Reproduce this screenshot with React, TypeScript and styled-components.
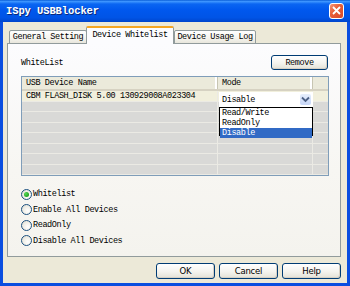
import * as React from "react"
import styled, { createGlobalStyle } from "styled-components"

const mono = `"Liberation Mono", "DejaVu Sans Mono", monospace`

const GlobalStyle = createGlobalStyle`
  html, body {
    margin: 0;
    padding: 0;
    background: #ffffff;
  }
  * {
    box-sizing: border-box;
  }
`

const rows = [
  { name: "CBM FLASH_DISK 5.00 130929008A023304", mode: "Disable" },
  null,
  null,
  null,
  null,
  null,
  null,
  null
]

const modes = ["Read/Write", "ReadOnly", "Disable"]

const options = [
  { label: "Whitelist", checked: true },
  { label: "Enable All Devices", checked: false },
  { label: "ReadOnly", checked: false },
  { label: "Disable All Devices", checked: false }
]

export default () => (
  <>
    <GlobalStyle />
    <Window>
      <TitleBar>
        <Title>ISpy USBBlocker</Title>
        <CloseButton>
          <svg width="9" height="9" viewBox="0 0 9 9">
            <path d="M1 1 L8 8 M8 1 L1 8" stroke="#fff" strokeWidth="1.8" />
          </svg>
        </CloseButton>
      </TitleBar>
      <Body>
        <TabStrip>
          <Tab width={78}>General Setting</Tab>
          <Tab width={88} active>
            Device Whitelist
          </Tab>
          <Tab width={82}>Device Usage Log</Tab>
        </TabStrip>
        <Panel>
          <TopRow>
            <Label>WhiteList</Label>
            <Button width={57}>Remove</Button>
          </TopRow>
          <List>
            <HeaderRow>
              <HeaderCell>USB Device Name</HeaderCell>
              <HeaderCell>Mode</HeaderCell>
              <HeaderCell />
            </HeaderRow>
            <RowArea>
              {rows.map((r, i) => (
                <Row key={i} filled={!!r}>
                  <Cell>{r ? r.name : ""}</Cell>
                  <Cell />
                  <Cell />
                </Row>
              ))}
            </RowArea>
            <Combo>
              <ComboText>Disable</ComboText>
              <ComboArrow>
                <svg width="9" height="7" viewBox="0 0 9 7">
                  <path
                    d="M1 1.5 L4.5 5 L8 1.5"
                    stroke="#4d6185"
                    strokeWidth="1.8"
                    fill="none"
                  />
                </svg>
              </ComboArrow>
            </Combo>
            <DropList>
              {modes.map(m => (
                <DropItem key={m} selected={m === "Disable"}>
                  {m}
                </DropItem>
              ))}
            </DropList>
          </List>
          <RadioGroup>
            {options.map(o => (
              <RadioRow key={o.label}>
                <RadioCircle>{o.checked && <RadioDot />}</RadioCircle>
                <RadioLabel>{o.label}</RadioLabel>
              </RadioRow>
            ))}
          </RadioGroup>
        </Panel>
        <ButtonRow>
          <Button width={59} sans>
            OK
          </Button>
          <Button width={59} sans>
            Cancel
          </Button>
          <Button width={59} sans>
            Help
          </Button>
        </ButtonRow>
      </Body>
    </Window>
  </>
)

const Window = styled.div`
  width: 350px;
  height: 286px;
  display: flex;
  flex-direction: column;
  background: #0a4ee0;
  overflow: hidden;
`

const TitleBar = styled.div`
  height: 22px;
  display: flex;
  align-items: center;
  padding: 0 6px 1px 6px;
  background: linear-gradient(
    to bottom,
    #0a5fd8 0%,
    #3d95ff 7%,
    #0a66f2 18%,
    #0058ee 45%,
    #0054e6 80%,
    #0045cc 100%
  );
`

const Title = styled.span`
  font-family: ${mono};
  font-weight: bold;
  font-size: 10.5px;
  letter-spacing: -0.1px;
  color: #ffffff;
  text-shadow: 1px 1px 0 #0a2a7a;
`

const CloseButton = styled.div`
  margin-left: auto;
  width: 15px;
  height: 16px;
  border: 1px solid #ffffff;
  border-radius: 3px;
  background: linear-gradient(135deg, #f4967a 0%, #e8603a 40%, #d8482a 100%);
  display: flex;
  align-items: center;
  justify-content: center;
`

const Body = styled.div`
  flex: 1;
  margin: 0 3px 3px 3px;
  background: #ece9d8;
  display: flex;
  flex-direction: column;
  padding: 5px 6px 4px 4px;
`

const TabStrip = styled.div`
  height: 17px;
  display: flex;
  align-items: flex-end;
  padding-left: 2px;
  margin-bottom: -1px;
  position: relative;
  z-index: 1;
`

const Tab = styled.div<{ width: number; active?: boolean }>`
  width: ${p => p.width}px;
  height: ${p => (p.active ? 18 : 14)}px;
  font-family: ${mono};
  font-size: 8.5px;
  letter-spacing: -0.4px;
  color: #000;
  display: flex;
  align-items: center;
  justify-content: center;
  border: 1px solid #919b9c;
  border-bottom: ${p => (p.active ? "none" : "1px solid #919b9c")};
  border-top: ${p => (p.active ? "2px solid #f5a623" : "1px solid #919b9c")};
  border-radius: 2px 2px 0 0;
  background: ${p =>
    p.active
      ? "#fcfcfe"
      : "linear-gradient(to bottom, #ffffff 0%, #f5f4ee 60%, #e8e6dc 100%)"};
  margin-right: ${p => (p.active ? 0 : -1)}px;
  padding-bottom: ${p => (p.active ? 2 : 0)}px;
`

const Panel = styled.div`
  flex: 1;
  border: 1px solid #919b9c;
  background: linear-gradient(to bottom, #fcfcfe 0%, #f7f6f2 60%, #f4f3ee 100%);
  padding: 11px 11px 0 13px;
  display: flex;
  flex-direction: column;
`

const TopRow = styled.div`
  height: 15px;
  display: flex;
  align-items: center;
  justify-content: space-between;
  padding-right: 1px;
`

const Label = styled.span`
  font-family: ${mono};
  font-size: 8.5px;
  letter-spacing: -0.4px;
  color: #000;
  padding-top: 1px;
`

const Button = styled.div<{ width: number; sans?: boolean }>`
  width: ${p => p.width}px;
  height: ${p => (p.sans ? 16 : 15)}px;
  border: 1px solid #003c74;
  border-radius: 3px;
  background: linear-gradient(to bottom, #ffffff 0%, #f4f3ee 55%, #e3e1d6 100%);
  box-shadow: inset -1px -1px 0 #d6d0c5;
  display: flex;
  align-items: center;
  justify-content: center;
  font-family: ${p =>
    p.sans ? `"DejaVu Sans", "Liberation Sans", sans-serif` : mono};
  font-size: 8.5px;
  letter-spacing: ${p => (p.sans ? -0.2 : -0.4)}px;
  color: #000;
`

const List = styled.div`
  position: relative;
  margin-top: 6px;
  width: 308px;
  height: 100px;
  border: 1px solid #7f9db9;
  background: #d8d8d6;
  display: flex;
  flex-direction: column;
`

const HeaderRow = styled.div`
  height: 14px;
  display: grid;
  grid-template-columns: 196px 95px 1fr;
  background: #ebeadb;
  border-bottom: 2px solid #d6d2c2;
`

const HeaderCell = styled.div`
  font-family: ${mono};
  font-size: 8.5px;
  letter-spacing: -0.4px;
  color: #000;
  display: flex;
  align-items: center;
  padding-left: 4px;
  border-right: 1px solid #c7c5b2;
  box-shadow: inset -2px 0 0 #ffffff;
  &:last-child {
    border-right: none;
    box-shadow: none;
  }
`

const RowArea = styled.div`
  flex: 1;
  display: flex;
  flex-direction: column;
`

const Row = styled.div<{ filled: boolean }>`
  flex: 1;
  display: grid;
  grid-template-columns: 196px 95px 1fr;
  background: ${p => (p.filled ? "#f1efdc" : "#d9d9d7")};
  border-bottom: 1px solid #ebeae4;
`

const Cell = styled.div`
  font-family: ${mono};
  font-size: 8.5px;
  letter-spacing: -0.4px;
  color: #000;
  display: flex;
  align-items: center;
  padding-left: 4px;
  border-right: 1px solid #ebeae4;
  white-space: nowrap;
  &:last-child {
    border-right: none;
  }
`

const Combo = styled.div`
  position: absolute;
  left: 197px;
  top: 15px;
  width: 94px;
  height: 15px;
  background: #ffffff;
  display: flex;
  align-items: center;
`

const ComboText = styled.span`
  flex: 1;
  font-family: ${mono};
  font-size: 8.5px;
  letter-spacing: -0.4px;
  color: #000;
  padding-left: 3px;
`

const ComboArrow = styled.div`
  width: 11px;
  height: 11px;
  margin-right: 2px;
  border-radius: 2px;
  background: linear-gradient(to bottom, #e6eefc 0%, #c6d6f7 100%);
  display: flex;
  align-items: center;
  justify-content: center;
`

const DropList = styled.div`
  position: absolute;
  left: 197px;
  top: 30px;
  width: 94px;
  height: 29px;
  background: #ffffff;
  border: 1px solid #000000;
  display: flex;
  flex-direction: column;
`

const DropItem = styled.div<{ selected: boolean }>`
  flex: 1;
  font-family: ${mono};
  font-size: 8.5px;
  letter-spacing: -0.4px;
  color: ${p => (p.selected ? "#ffffff" : "#000000")};
  background: ${p => (p.selected ? "#316ac5" : "transparent")};
  display: flex;
  align-items: center;
  padding-left: 2px;
`

const RadioGroup = styled.div`
  margin-top: 10.5px;
  display: flex;
  flex-direction: column;
`

const RadioRow = styled.div`
  height: 15.5px;
  display: flex;
  align-items: center;
`

const RadioCircle = styled.div`
  width: 11px;
  height: 11px;
  border-radius: 50%;
  border: 1px solid #1c5180;
  background: radial-gradient(circle at 65% 65%, #ffffff 0%, #f0efe8 50%, #d8d6cb 100%);
  display: flex;
  align-items: center;
  justify-content: center;
  flex-shrink: 0;
`

const RadioDot = styled.div`
  width: 5px;
  height: 5px;
  border-radius: 50%;
  background: radial-gradient(circle at 35% 35%, #55d855 0%, #21a121 70%);
`

const RadioLabel = styled.span`
  font-family: ${mono};
  font-size: 8.5px;
  letter-spacing: -0.4px;
  color: #000;
  margin-left: 1px;
`

const ButtonRow = styled.div`
  margin-top: 6px;
  display: flex;
  justify-content: flex-end;
  gap: 4px;
`
